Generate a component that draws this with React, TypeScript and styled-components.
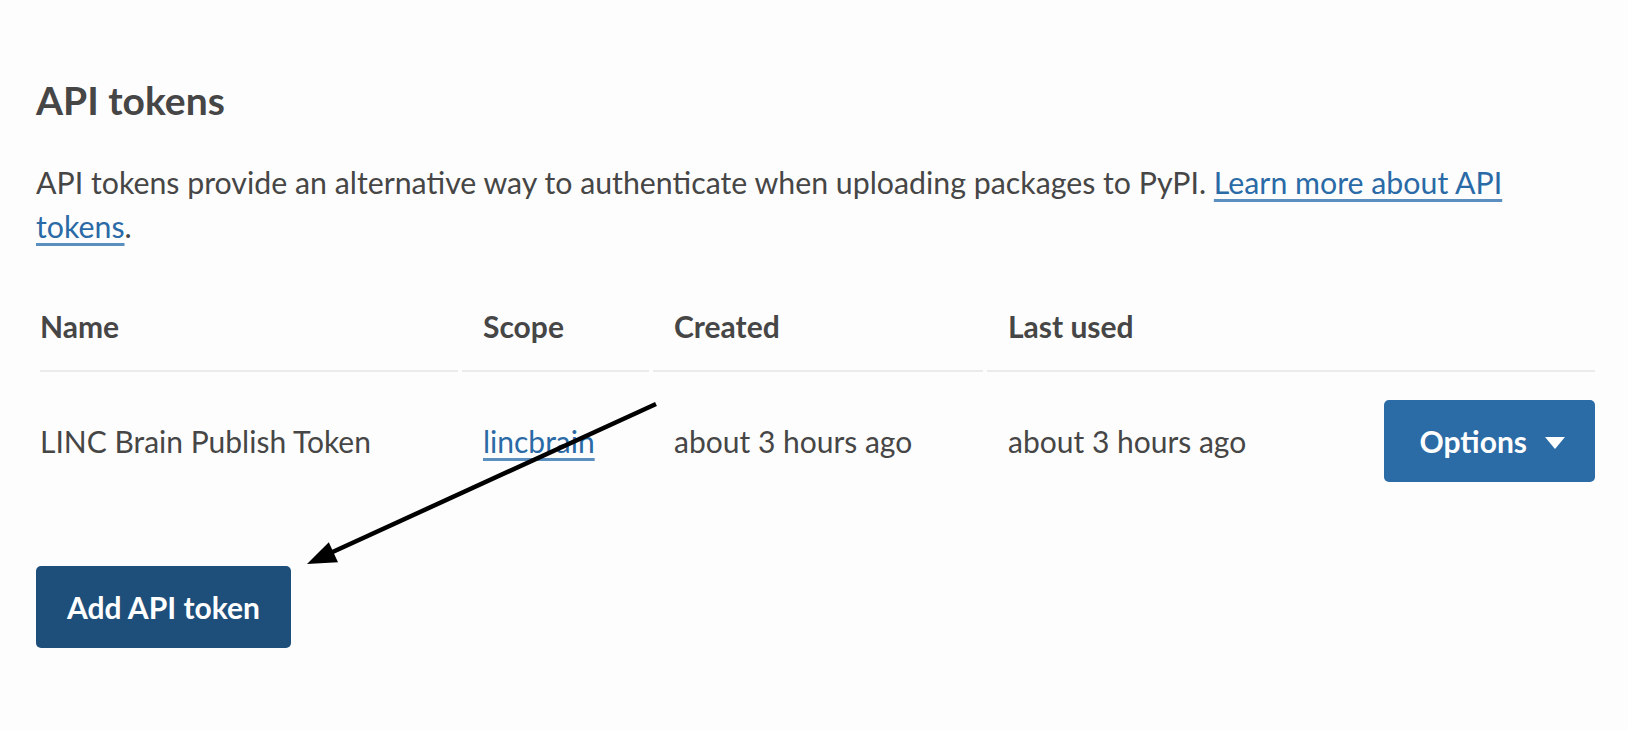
import React from 'react';
import styled, { createGlobalStyle } from 'styled-components';

const GlobalStyle = createGlobalStyle`
    html, body {
        margin: 0;
        padding: 0;
        background: #fdfdfd;
    }
    body {
        font-family: Lato, "Noto Sans", sans-serif;
        color: #464646;
    }
`;

const Page = styled.div`
    position: relative;
    width: 1628px;
    height: 730px;
    box-sizing: border-box;
    padding: 76px 33px 0 36px;
    overflow: hidden;
`;

const Heading = styled.h2`
    margin: 0;
    font-size: 39px;
    line-height: 48px;
    font-weight: 700;
    color: #464646;
`;

const Intro = styled.p`
    margin: 36px 0 0;
    font-size: 30.3px;
    line-height: 44px;
    max-width: 1490px;
`;

const Link = styled.a`
    color: #2a6aa6;
    text-decoration: underline;
    text-decoration-color: #5b8fc0;
    text-decoration-thickness: 3px;
    text-underline-offset: 5px;
`;

const Table = styled.div`
    margin-top: 56px;
    display: grid;
    grid-template-columns: 418px 187px 330px 1fr auto;
    column-gap: 4px;
    padding-left: 4px;
`;

const HeadCell = styled.div<{ span?: number; first?: boolean }>`
    grid-column: span ${p => p.span || 1};
    padding: 0 0 22px ${p => (p.first ? '0' : '21px')};
    font-size: 30px;
    line-height: 44px;
    font-weight: 700;
    border-bottom: 2px solid #ebebeb;
`;

const Cell = styled.div<{ first?: boolean; right?: boolean }>`
    display: flex;
    align-items: center;
    justify-content: ${p => (p.right ? 'flex-end' : 'flex-start')};
    padding: 28px 0 28px ${p => (p.first ? '0' : '21px')};
    font-size: 30px;
    line-height: 44px;
`;

const Button = styled.button<{ dark?: boolean }>`
    display: inline-flex;
    align-items: center;
    gap: 18px;
    height: 82px;
    border: 0;
    border-radius: 5px;
    background: ${p => (p.dark ? '#1e4f7b' : '#2b6ba6')};
    color: #fff;
    font-family: Lato, "Noto Sans", sans-serif;
    font-size: 30px;
    line-height: 44px;
    font-weight: 700;
    cursor: pointer;
`;

const OptionsButton = styled(Button)`
    padding: 0 30px 0 36px;
`;

const AddButton = styled(Button)`
    margin-top: 56px;
    padding: 0 31px;
`;

const Caret = styled.span`
    width: 0;
    height: 0;
    border-left: 10px solid transparent;
    border-right: 10px solid transparent;
    border-top: 12px solid #fff;
    margin-top: 4px;
`;

const Overlay = styled.svg`
    position: absolute;
    left: 0;
    top: 0;
    pointer-events: none;
`;

const App: React.FC = () => {
    return (
        <>
            <GlobalStyle />
            <Page>
                <Heading>API tokens</Heading>
                <Intro>
                    API tokens provide an alternative way to authenticate when uploading packages to PyPI.{' '}
                    <Link href="#">Learn more about API tokens</Link>.
                </Intro>

                <Table>
                    <HeadCell first>Name</HeadCell>
                    <HeadCell>Scope</HeadCell>
                    <HeadCell>Created</HeadCell>
                    <HeadCell span={2}>Last used</HeadCell>

                    <Cell first>LINC Brain Publish Token</Cell>
                    <Cell><Link href="#">lincbrain</Link></Cell>
                    <Cell>about 3 hours ago</Cell>
                    <Cell>about 3 hours ago</Cell>
                    <Cell right>
                        <OptionsButton>
                            Options
                            <Caret />
                        </OptionsButton>
                    </Cell>
                </Table>

                <AddButton dark>Add API token</AddButton>

                <Overlay width="1628" height="730" viewBox="0 0 1628 730">
                    <line x1="656" y1="404" x2="326" y2="555" stroke="#000" strokeWidth="4.5" />
                    <polygon points="307,564 328.8,542.3 338,562.3" fill="#000" />
                </Overlay>
            </Page>
        </>
    );
};

export default App;
